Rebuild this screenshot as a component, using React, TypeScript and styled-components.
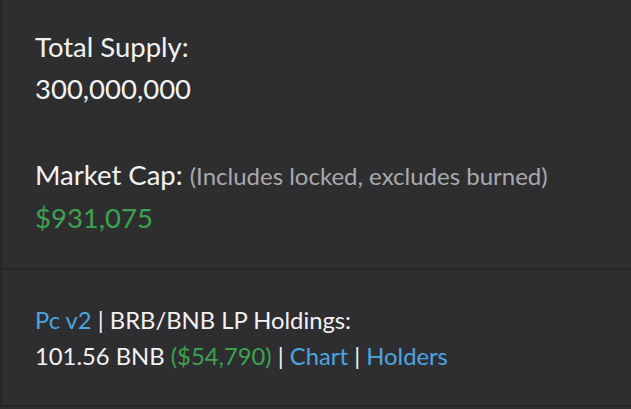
import styled, { createGlobalStyle } from "styled-components";

const GlobalStyle = createGlobalStyle`
  html, body {
    margin: 0;
    padding: 0;
    background: #2e2e30;
  }
  body {
    font-family: Lato, "Open Sans", sans-serif;
    color: #f2f2f2;
  }
`;

const Card = styled.div`
  width: 631px;
  height: 407px;
  box-sizing: border-box;
  background: #2e2e30;
  border-left: 2px solid #272729;
  border-bottom: 2px solid #262628;
  display: flex;
  flex-direction: column;
`;

const Section = styled.section<{ $top: number; $size: number; $lh: number; $h?: number }>`
  padding: ${({ $top }) => $top}px 0 0 33px;
  font-size: ${({ $size }) => $size}px;
  line-height: ${({ $lh }) => $lh}px;
  ${({ $h }) => ($h ? `height: ${$h}px; box-sizing: border-box;` : "")}

  & + & {
    border-top: 2px solid #252527;
  }
`;

const Line = styled.div<{ $gap?: number }>`
  margin-top: ${({ $gap }) => $gap ?? 0}px;
  white-space: nowrap;
`;

const Note = styled.span`
  color: #a9a9ad;
  font-size: 24px;
`;

const Money = styled.span`
  color: #3da24f;
`;

const Link = styled.a`
  color: #4ba6e0;
  text-decoration: none;
`;

export default function App() {
  return (
    <>
      <GlobalStyle />
      <Card>
        <Section $top={26} $size={27.5} $lh={42} $h={268}>
          <Line>Total Supply:</Line>
          <Line>300,000,000</Line>
          <Line $gap={44}>
            Market Cap: <Note>(Includes locked, excludes burned)</Note>
          </Line>
          <Line>
            <Money>$931,075</Money>
          </Line>
        </Section>
        <Section $top={32} $size={23.8} $lh={36}>
          <Line>
            <Link href="#">Pc v2</Link> | BRB/BNB LP Holdings:
          </Line>
          <Line>
            101.56 BNB <Money>($54,790)</Money> | <Link href="#">Chart</Link> |{" "}
            <Link href="#">Holders</Link>
          </Line>
        </Section>
      </Card>
    </>
  );
}
